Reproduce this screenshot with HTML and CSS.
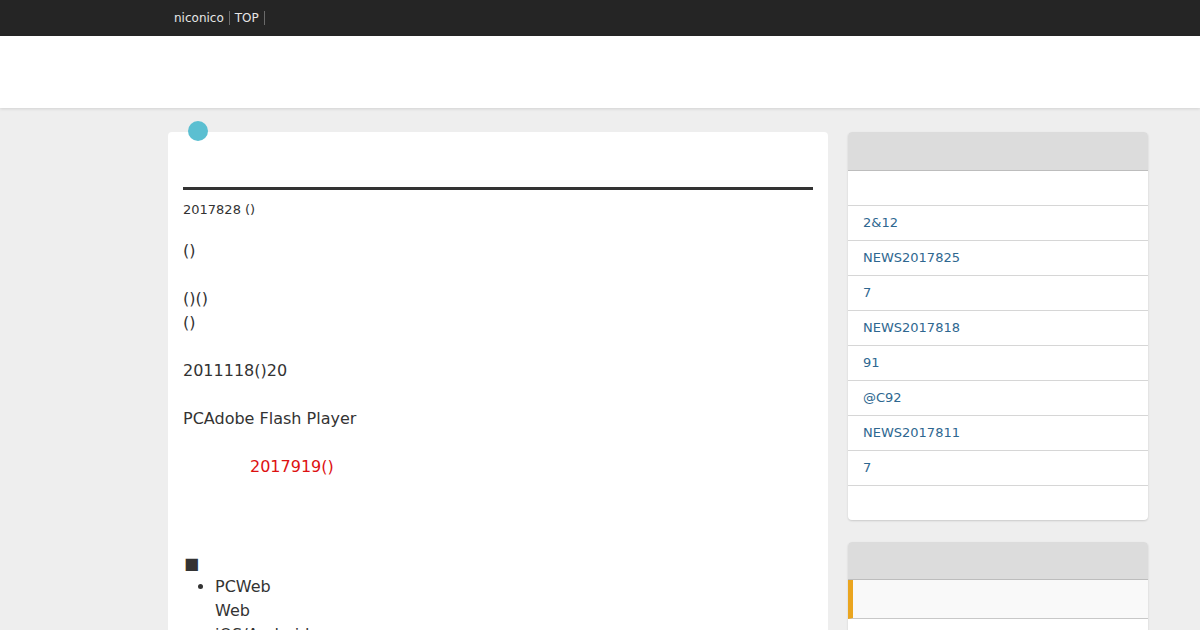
FILE: index.html
```html
<!DOCTYPE html>
<html>
<head>
<meta charset="utf-8">
<link rel="stylesheet" href="styles.css">
</head>
<body>
<div class="topbar">
  <nav class="topnav">
    <a class="topnav-item" href="#">niconico</a><a class="topnav-item" href="#">TOP</a>
  </nav>
</div>
<header class="site-header"></header>
<div class="page">
  <main class="article">
    <span class="badge"></span>
    <div class="article-title"></div>
    <div class="article-date">2017828 ()</div>
    <div class="article-body">
      <p>()</p>
      <p>()()<br>()</p>
      <p>2011118()20</p>
      <p>PCAdobe Flash Player</p>
      <p class="notice"><span class="red">2017919()</span></p>
      <p class="mark">■</p>
      <ul class="list">
        <li>PCWeb<br>Web</li>
        <li>iOS/Android</li>
      </ul>
    </div>
  </main>
  <aside class="sidebar">
    <section class="side-card">
      <div class="side-head"></div>
      <div class="side-row"></div>
      <a class="side-row side-link" href="#">2&amp;12</a>
      <a class="side-row side-link" href="#">NEWS2017825</a>
      <a class="side-row side-link" href="#">7</a>
      <a class="side-row side-link" href="#">NEWS2017818</a>
      <a class="side-row side-link" href="#">91</a>
      <a class="side-row side-link" href="#">@C92</a>
      <a class="side-row side-link" href="#">NEWS2017811</a>
      <a class="side-row side-link" href="#">7</a>
      <div class="side-row side-last"></div>
    </section>
    <section class="side-card">
      <div class="side-head side-head-2"></div>
      <div class="side-row side-active"></div>
      <div class="side-row"></div>
    </section>
  </aside>
</div>
</body>
</html>
```
FILE: styles.css
```css
html, body {
  margin: 0;
  padding: 0;
}
body {
  background: #eeeeee;
  font-family: "DejaVu Sans", "Noto Sans CJK JP", sans-serif;
  color: #333333;
  overflow: hidden;
  height: 630px;
}
.topbar {
  height: 36px;
  background: #252525;
}
.topnav {
  display: flex;
  align-items: center;
  height: 36px;
  padding-left: 169px;
}
.topnav-item {
  font-size: 12px;
  line-height: 14px;
  color: #e6e6e6;
  text-decoration: none;
  padding: 0 5px;
  border-right: 1px solid #6a6a6a;
}
.site-header {
  height: 72px;
  background: #ffffff;
  box-shadow: 0 1px 3px rgba(0,0,0,0.12);
  position: relative;
}
.page {
  display: flex;
  gap: 20px;
  margin-left: 168px;
  width: 980px;
  padding-top: 24px;
  align-items: flex-start;
}
.article {
  position: relative;
  width: 660px;
  box-sizing: border-box;
  padding: 0 15px 40px;
  background: #ffffff;
  border-radius: 4px;
  min-height: 600px;
}
.badge {
  position: absolute;
  top: -11px;
  left: 20px;
  width: 20px;
  height: 20px;
  border-radius: 50%;
  background: #5bbfd1;
}
.article-title {
  height: 55px;
  border-bottom: 3px solid #333333;
}
.article-date {
  margin-top: 11px;
  font-size: 13px;
  line-height: 18px;
  color: #333333;
}
.article-body {
  margin-top: 20px;
  font-size: 16px;
  line-height: 24px;
  color: #333333;
}
.article-body p {
  margin: 0 0 24px;
}
.notice {
  padding-left: 67px;
}
.red {
  color: #dd1111;
}
.article-body p.mark {
  margin: 74px 0 0;
  line-height: 22px;
  padding-left: 1px;
}
.list {
  margin: 0;
  padding-left: 32px;
}
.sidebar {
  width: 300px;
  display: flex;
  flex-direction: column;
  gap: 22px;
}
.side-card {
  background: #ffffff;
  border-radius: 4px;
  overflow: hidden;
  box-shadow: 0 1px 2px rgba(0,0,0,0.15);
}
.side-head {
  height: 38px;
  background: #dcdcdc;
  border-bottom: 1px solid #bdbdbd;
}
.side-head-2 {
  height: 37px;
}
.side-row {
  display: flex;
  align-items: center;
  padding: 0 15px 1px;
  box-sizing: content-box;
  height: 33px;
  border-bottom: 1px solid #d6d6d6;
}
.side-last {
  border-bottom: none;
}
.side-link {
  font-size: 13px;
  color: #2e6790;
  text-decoration: none;
}
.side-active {
  height: 37px;
  background: #f9f9f9;
  border-left: 5px solid #eaa51f;
  border-bottom-color: #c8c8c8;
}
```
